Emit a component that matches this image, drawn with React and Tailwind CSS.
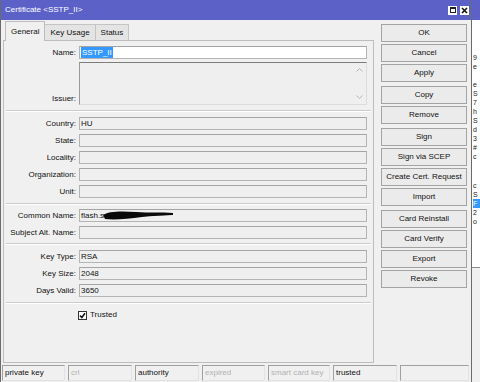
import React from "react";

const font = { fontFamily: "'Liberation Sans', Arial, sans-serif" };

function Label({ children, bottom }) {
  return (
    <div className={`w-[72px] shrink-0 text-right text-[8px] leading-[10px] text-[#111] ${bottom ? "self-end mb-[1px]" : ""}`}>
      {children}
    </div>
  );
}

function Field({ children, white }) {
  return (
    <div
      className={`ml-[3px] h-[13px] w-[288px] border border-[#b4b4b4] border-t-[#a4a4a4] ${white ? "bg-white" : "bg-[#efefef]"} flex items-center pl-[1px] text-[8px] leading-[10px] text-[#111] overflow-hidden whitespace-nowrap`}
    >
      {children}
    </div>
  );
}

function Row({ label, children, white, mt }) {
  return (
    <div className={`flex items-center h-[13px] ${mt}`}>
      <Label>{label}</Label>
      <Field white={white}>{children}</Field>
    </div>
  );
}

function Sep({ mt }) {
  return <div className={`${mt} mx-[2px] h-[2px] border-t border-[#cbcbcb] border-b border-b-white`} />;
}

function Btn({ children, mt = "mt-[2px]" }) {
  return (
    <div className={`${mt} h-[18px] w-[86px] border border-[#a3a3a3] bg-[#ebebeb] flex items-center justify-center text-[8px] leading-[10px] text-[#111] whitespace-nowrap`}>
      {children}
    </div>
  );
}

function Cell({ w, children, dim }) {
  return (
    <div
      className={`${w} h-[16px] border border-t-[#a0a0a0] border-l-[#a0a0a0] border-b-[#e2e2e2] border-r-[#e2e2e2] bg-[#f0f0f0] pl-[2px] flex items-center text-[8px] leading-[10px] whitespace-nowrap ${dim ? "text-[#b0b0b0]" : "text-[#111]"}`}
    >
      {children}
    </div>
  );
}

export default function App() {
  return (
    <div className="w-[480px] h-[382px] flex bg-white overflow-hidden" style={font}>
      {/* Window */}
      <div className="w-[472px] h-[382px] flex flex-col border-l border-r border-[#6b6b6b] bg-[#f0f0f0]">
        {/* Title bar */}
        <div className="h-[20px] bg-[#5c61c8] flex items-center pl-[4px] pr-[2px] shrink-0">
          <div className="text-white text-[8px] leading-[10px] whitespace-nowrap">Certificate &lt;SSTP_II&gt;</div>
          <div className="ml-auto flex items-center gap-[3px]">
            <div className="w-[9px] h-[9px] bg-white flex items-center justify-center">
              <div className="w-[6px] h-[6px] border border-[#202020] border-t-2" />
            </div>
            <div className="w-[9px] h-[9px] bg-white flex items-center justify-center">
              <svg width="7" height="7" viewBox="0 0 7 7">
                <path d="M1 1 L6 6 M6 1 L1 6" stroke="#111" strokeWidth="1.6" />
              </svg>
            </div>
          </div>
        </div>

        {/* Body */}
        <div className="flex h-[343px] shrink-0">
          {/* Left: tabs + panel */}
          <div className="pl-[2px] w-[373px] flex flex-col">
            <div className="h-[20px] flex items-end pl-[2px]">
              <div className="relative z-10 h-[20px] mb-[-1px] px-[5px] pt-[5px] border border-b-0 border-[#bdbdbd] bg-[#f0f0f0] text-[8px] leading-[10px] text-[#111]">
                General
              </div>
              <div className="h-[16px] px-[5px] pt-[3px] border border-b-0 border-l-0 border-[#c4c4c4] bg-[#e4e4e4] text-[8px] leading-[10px] text-[#111]">
                Key Usage
              </div>
              <div className="h-[16px] px-[5px] pt-[3px] border border-b-0 border-l-0 border-[#c4c4c4] bg-[#e4e4e4] text-[8px] leading-[10px] text-[#111]">
                Status
              </div>
            </div>
            <div className="h-[323px] w-[371px] border border-[#bdbdbd] flex flex-col">
              <Row label="Name:" white mt="mt-[5px]">
                <span className="bg-[#3399ff] text-white px-[1px] leading-[11px]">SSTP_II</span>
              </Row>
              <div className="flex h-[43px] mt-[3px]">
                <Label bottom>Issuer:</Label>
                <div className="ml-[3px] h-[43px] w-[288px] border border-t-[#7d7d7d] border-l-[#9a9a9a] border-b-[#dcdcdc] border-r-[#dcdcdc] bg-[#efefef] flex justify-end pr-[3px]">
                  <div className="flex flex-col justify-between py-[5px]">
                    <svg width="7" height="4" viewBox="0 0 7 4"><path d="M0.5 3.5 L3.5 0.5 L6.5 3.5" fill="none" stroke="#b5b5b5" strokeWidth="1" /></svg>
                    <svg width="7" height="4" viewBox="0 0 7 4"><path d="M0.5 0.5 L3.5 3.5 L6.5 0.5" fill="none" stroke="#b5b5b5" strokeWidth="1" /></svg>
                  </div>
                </div>
              </div>
              <Sep mt="mt-[5px]" />
              <Row label="Country:" mt="mt-[5px]">HU</Row>
              <Row label="State:" mt="mt-[4px]" />
              <Row label="Locality:" mt="mt-[4px]" />
              <Row label="Organization:" mt="mt-[4px]" />
              <Row label="Unit:" mt="mt-[4px]" />
              <Sep mt="mt-[5px]" />
              <Row label="Common Name:" mt="mt-[4px]">
                <span>flash.s</span>
                <svg width="72" height="11" viewBox="0 0 72 11" className="-ml-[2px]">
                  <path d="M1 5 C6 1 20 1 34 2 C48 3 58 2 71 3 L71 5 C60 5 50 6 40 7 C26 9 12 10 3 9 Z" fill="#0a0a0a" />
                  <path d="M4 6 C20 4 40 5 68 4" fill="none" stroke="#0a0a0a" strokeWidth="2" />
                </svg>
              </Row>
              <Row label="Subject Alt. Name:" mt="mt-[4px]" />
              <Sep mt="mt-[4px]" />
              <Row label="Key Type:" mt="mt-[5px]">RSA</Row>
              <Row label="Key Size:" mt="mt-[4px]">2048</Row>
              <Row label="Days Valid:" mt="mt-[4px]">3650</Row>
              <Sep mt="mt-[5px]" />
              <div className="mt-[6px] flex items-center pl-[74px]">
                <div className="w-[9px] h-[9px] border border-[#333] bg-white flex items-center justify-center">
                  <svg width="7" height="7" viewBox="0 0 7 7">
                    <path d="M1 3.5 L2.8 5.5 L6 1.2" fill="none" stroke="#111" strokeWidth="1.5" />
                  </svg>
                </div>
                <span className="ml-[3px] text-[8px] leading-[10px] text-[#111]">Trusted</span>
              </div>
            </div>
          </div>

          {/* Right buttons */}
          <div className="ml-[7px] pt-[4px] flex flex-col">
            <Btn mt="mt-0">OK</Btn>
            <Btn>Cancel</Btn>
            <Btn>Apply</Btn>
            <Btn mt="mt-[4px]">Copy</Btn>
            <Btn>Remove</Btn>
            <Btn mt="mt-[4px]">Sign</Btn>
            <Btn>Sign via SCEP</Btn>
            <Btn>Create Cert. Request</Btn>
            <Btn>Import</Btn>
            <Btn mt="mt-[4px]">Card Reinstall</Btn>
            <Btn>Card Verify</Btn>
            <Btn>Export</Btn>
            <Btn>Revoke</Btn>
          </div>
        </div>

        {/* Status bar */}
        <div className="mt-[2px] flex gap-[3px] pl-[1px]">
          <Cell w="w-[63px]">private key</Cell>
          <Cell w="w-[64px]" dim>crl</Cell>
          <Cell w="w-[64px]">authority</Cell>
          <Cell w="w-[63px]" dim>expired</Cell>
          <Cell w="w-[62px]" dim>smart card key</Cell>
          <Cell w="w-[64px]">trusted</Cell>
          <Cell w="w-[69px]"></Cell>
        </div>
      </div>

      {/* Background window strip */}
      <div className="w-[8px] h-[382px] flex flex-col pl-[1px] text-[7px] leading-[9px] text-[#222] overflow-hidden whitespace-nowrap">
        <div className="h-[20px] -ml-[1px] bg-[#5c61c8] shrink-0" />
        <div className="pt-[33px] flex flex-col">
          <span>9</span>
          <span>e</span>
          <span>&nbsp;</span>
          <span>e</span>
          <span>S</span>
          <span>7</span>
          <span>h</span>
          <span>S</span>
          <span>d</span>
          <span>3</span>
          <span>#</span>
          <span>c</span>
        </div>
        <div className="pt-[20px] flex flex-col">
          <span>c</span>
          <span>S</span>
          <span className="bg-[#3399ff] text-white">F</span>
          <span>2</span>
          <span>o</span>
        </div>
        <div className="mt-auto -ml-[1px] h-[115px] border-t border-[#8a8a8a] bg-[#f0f0f0]" />
      </div>
    </div>
  );
}
